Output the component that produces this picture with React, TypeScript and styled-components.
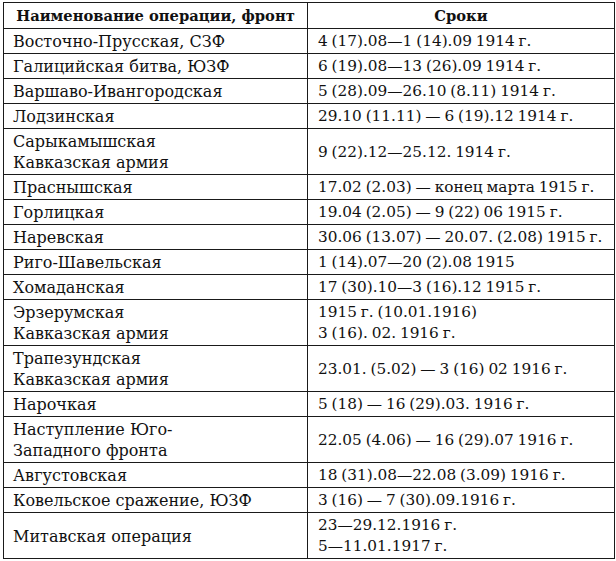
import React from "react";
import styled, { createGlobalStyle } from "styled-components";

const Global = createGlobalStyle`
  html, body { margin: 0; padding: 0; background: #ffffff; }
  body { font-family: "DejaVu Serif", "Liberation Serif", serif; color: #111; }
`;

const Page = styled.div`
  padding: 2px 0 0 3px;
`;

const Table = styled.table`
  border-collapse: collapse;
  width: 611px;
  table-layout: fixed;
  font-size: 16px;
  line-height: 21px;
`;

const HeadCell = styled.th`
  border: 1px solid #1a1a1a;
  font-weight: bold;
  font-size: 14.7px;
  text-align: center;
  padding: 2px 4px 2px 4px;
  white-space: nowrap;
`;

const Cell = styled.td<{ $right?: boolean }>`
  border: 1px solid #1a1a1a;
  vertical-align: middle;
  text-align: left;
  padding: 2px 4px 1px ${(p) => (p.$right ? "10px" : "9px")};
  font-size: ${(p) => (p.$right ? "15.3px" : "16px")};
  word-spacing: ${(p) => (p.$right ? "-1px" : "0")};
  white-space: nowrap;
`;

const Line = styled.div``;

type Row = { name: string[]; date: string[] };

const rows: Row[] = [
  { name: ["Восточно-Прусская, СЗФ"], date: ["4 (17).08—1 (14).09 1914 г."] },
  { name: ["Галицийская битва, ЮЗФ"], date: ["6 (19).08—13 (26).09 1914 г."] },
  { name: ["Варшаво-Ивангородская"], date: ["5 (28).09—26.10 (8.11) 1914 г."] },
  { name: ["Лодзинская"], date: ["29.10 (11.11) — 6 (19).12 1914 г."] },
  { name: ["Сарыкамышская", "Кавказская армия"], date: ["9 (22).12—25.12. 1914 г."] },
  { name: ["Праснышская"], date: ["17.02 (2.03) — конец марта 1915 г."] },
  { name: ["Горлицкая"], date: ["19.04 (2.05) — 9 (22) 06 1915 г."] },
  { name: ["Наревская"], date: ["30.06 (13.07) — 20.07. (2.08) 1915 г."] },
  { name: ["Риго-Шавельская"], date: ["1 (14).07—20 (2).08 1915"] },
  { name: ["Хомаданская"], date: ["17 (30).10—3 (16).12 1915 г."] },
  { name: ["Эрзерумская", "Кавказская армия"], date: ["1915 г. (10.01.1916)", "3 (16). 02. 1916 г."] },
  { name: ["Трапезундская", "Кавказская армия"], date: ["23.01. (5.02) — 3 (16) 02 1916 г."] },
  { name: ["Нарочкая"], date: ["5 (18) — 16 (29).03. 1916 г."] },
  { name: ["Наступление Юго-", "Западного фронта"], date: ["22.05 (4.06) — 16 (29).07 1916 г."] },
  { name: ["Августовская"], date: ["18 (31).08—22.08 (3.09) 1916 г."] },
  { name: ["Ковельское сражение, ЮЗФ"], date: ["3 (16) — 7 (30).09.1916 г."] },
  { name: ["Митавская операция"], date: ["23—29.12.1916 г.", "5—11.01.1917 г."] },
];

export default function App() {
  return (
    <>
      <Global />
      <Page>
        <Table>
          <colgroup>
            <col style={{ width: 304 }} />
            <col style={{ width: 307 }} />
          </colgroup>
          <thead>
            <tr>
              <HeadCell>Наименование операции, фронт</HeadCell>
              <HeadCell>Сроки</HeadCell>
            </tr>
          </thead>
          <tbody>
            {rows.map((r, i) => (
              <tr key={i}>
                <Cell>
                  {r.name.map((l, j) => (
                    <Line key={j}>{l}</Line>
                  ))}
                </Cell>
                <Cell $right>
                  {r.date.map((l, j) => (
                    <Line key={j}>{l}</Line>
                  ))}
                </Cell>
              </tr>
            ))}
          </tbody>
        </Table>
      </Page>
    </>
  );
}
